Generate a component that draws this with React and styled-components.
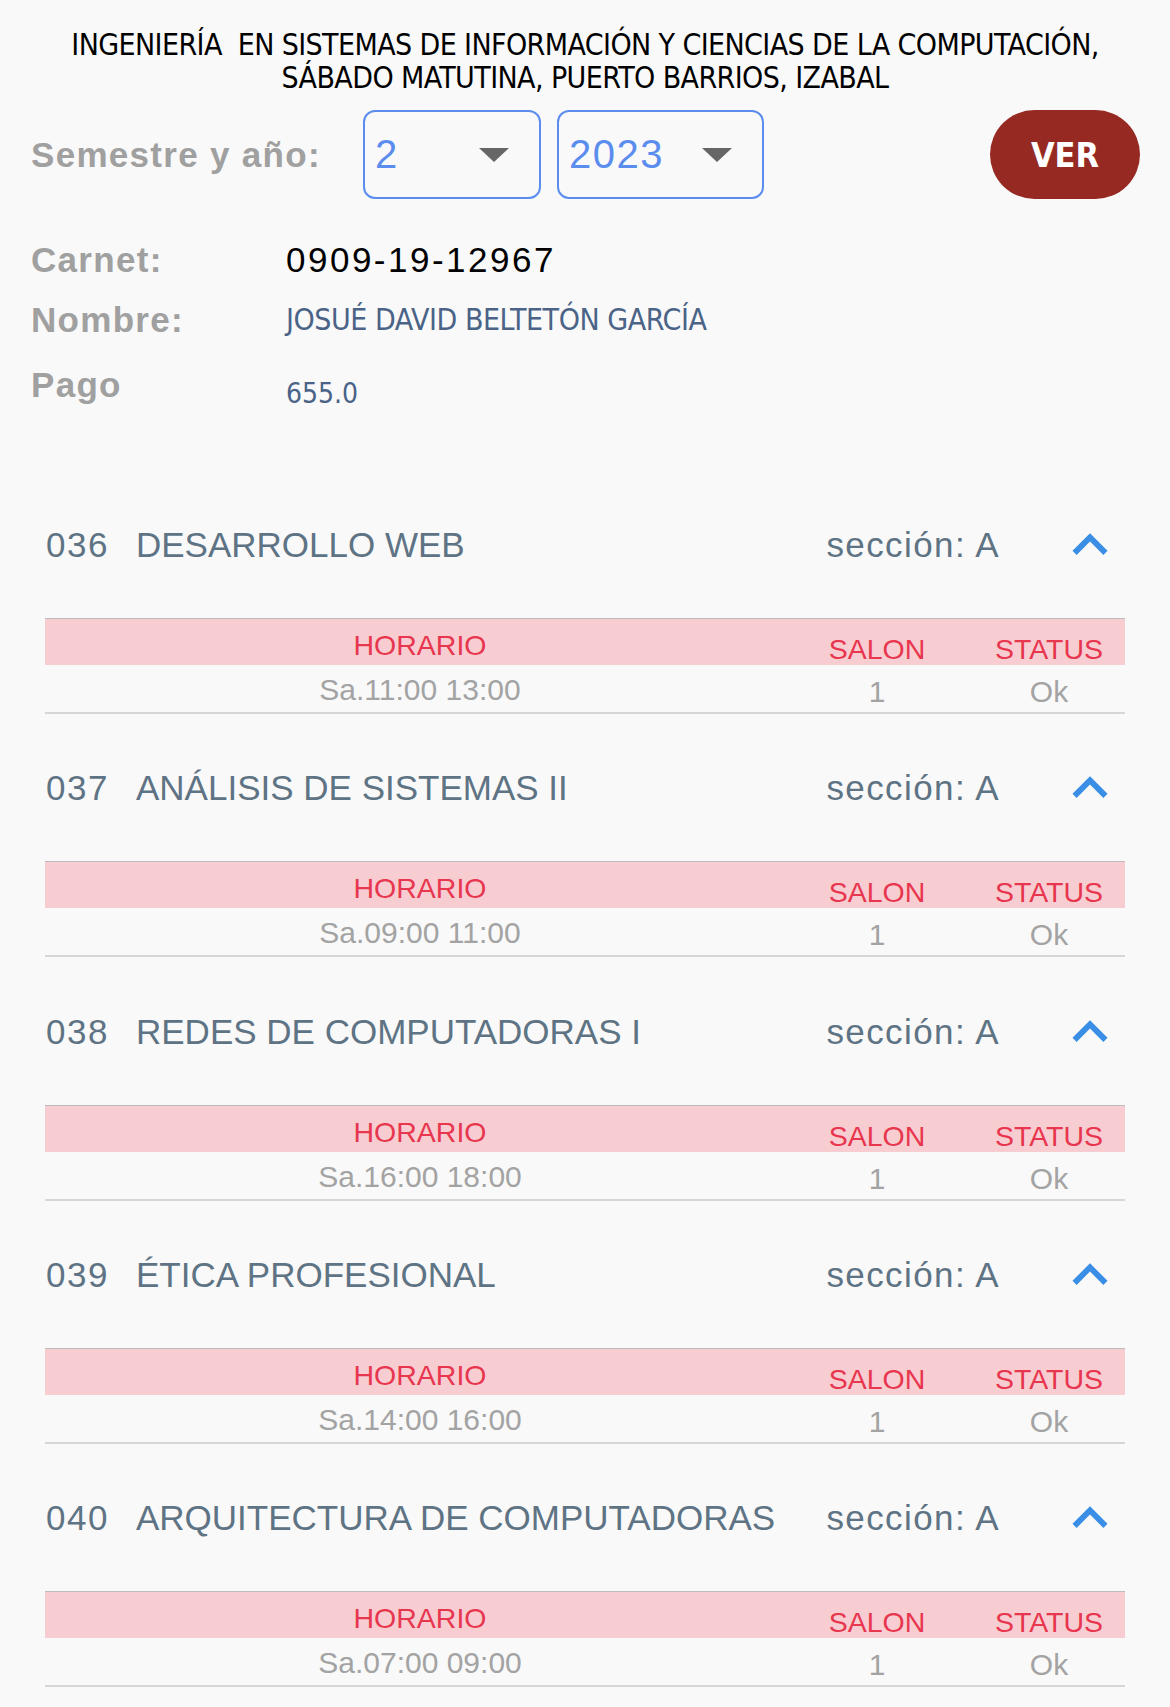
import React from "react"
import styled, { createGlobalStyle } from "styled-components"

const GlobalStyle = createGlobalStyle`
  body {
    margin: 0;
    background: #f9f9f9;
    font-family: "Liberation Sans", Arial, sans-serif;
  }
`

const Page = styled.div`
  width: 1170px;
  background: #f9f9f9;
`

const Title = styled.h1`
  margin: 0;
  padding-top: 28px;
  text-align: center;
  font-family: "DejaVu Sans Condensed", "DejaVu Sans", sans-serif;
  font-stretch: condensed;
  font-weight: normal;
  font-size: 30px;
  line-height: 33px;
  letter-spacing: -0.6px;
  color: #000;
`

const FilterRow = styled.div`
  display: flex;
  align-items: center;
  height: 89px;
  margin-top: 16px;
  padding: 0 30px 0 31px;
`

const Label = styled.span`
  font-weight: bold;
  font-size: 35px;
  letter-spacing: 1.3px;
  color: #a0a0a0;
`

const Select = styled.div`
  box-sizing: border-box;
  display: flex;
  align-items: center;
  justify-content: space-between;
  width: ${p => p.$width}px;
  height: 89px;
  margin-left: ${p => p.$gap}px;
  padding: 0 30px 0 10px;
  border: 2px solid #5b8def;
  border-radius: 12px;
  font-family: "Liberation Sans", Arial, sans-serif;
  font-size: 40px;
  letter-spacing: 1.5px;
  color: #5b8def;
`

const Caret = styled.span`
  width: 0;
  height: 0;
  border-left: 15px solid transparent;
  border-right: 15px solid transparent;
  border-top: 14px solid #666;
`

const Button = styled.button`
  width: 150px;
  height: 89px;
  margin-left: auto;
  border: none;
  border-radius: 45px;
  background: #962a23;
  color: #fff;
  font-family: "DejaVu Sans Condensed", "DejaVu Sans", sans-serif;
  font-stretch: condensed;
  font-weight: bold;
  font-size: 34px;
`

const Info = styled.div`
  margin-top: 30.5px;
  padding-left: 31px;
`

const InfoRow = styled.div`
  display: grid;
  grid-template-columns: 255px 1fr;
  align-items: ${p => (p.$top ? "start" : "center")};
  height: 60px;
`

const Value = styled.span`
  font-size: 35px;
  letter-spacing: 2.5px;
  color: #000;
`

const NameValue = styled.span`
  font-family: "DejaVu Sans Condensed", "DejaVu Sans", sans-serif;
  font-stretch: condensed;
  font-size: ${p => p.$size}px;
  letter-spacing: ${p => p.$spacing || 0}px;
  color: #4a6387;
  padding-top: ${p => p.$shift || 0}px;
`

const TopLabel = styled(Label)`
  padding-top: ${p => p.$shift || 0}px;
`

const CourseList = styled.div`
  margin-top: 100.5px;
`

const Section = styled.section`
  padding: 0 45px 39.3px;
`

const CourseHead = styled.div`
  display: flex;
  align-items: center;
  height: 70px;
  font-size: 35px;
  color: #5e7384;
`

const Code = styled.span`
  width: 90px;
  padding-left: 1px;
  letter-spacing: 1.5px;
`

const CourseName = styled.span`
  flex: 1;
`

const Seccion = styled.span`
  margin-right: 55px;
  letter-spacing: 1.4px;
`

const Toggle = styled.span`
  display: flex;
  justify-content: center;
  width: 70px;
  color: #3a8ee6;
`

const Table = styled.div`
  margin-top: 38px;
  border-top: 1px solid #bcbcbc;
  border-bottom: 2px solid #d6d6d6;
`

const Row = styled.div`
  display: grid;
  grid-template-columns: 750px 164px 166px;
  height: ${p => p.$height}px;
  background: ${p => p.$head ? "#f7cdd2" : "transparent"};
`

const Cell = styled.div`
  text-align: center;
  font-size: ${p => p.$head ? 28.5 : 30}px;
  line-height: ${p => p.$height}px;
  padding-top: ${p => p.$shift}px;
  padding-left: ${p => p.$indent || 0}px;
  color: ${p => p.$head ? "#e8364f" : "#a3a3a3"};
`

const Chevron = () => (
  <svg width="76" height="76" viewBox="0 0 24 24" fill="currentColor">
    <path d="M12 8l-6 6 1.41 1.41L12 10.83l4.59 4.58L18 14z" />
  </svg>
)

const courses = [
  { code: "036", name: "DESARROLLO WEB", time: "Sa.11:00 13:00" },
  { code: "037", name: "ANÁLISIS DE SISTEMAS II", time: "Sa.09:00 11:00" },
  { code: "038", name: "REDES DE COMPUTADORAS I", time: "Sa.16:00 18:00" },
  { code: "039", name: "ÉTICA PROFESIONAL", time: "Sa.14:00 16:00" },
  { code: "040", name: "ARQUITECTURA DE COMPUTADORAS", time: "Sa.07:00 09:00" },
]

const Course = ({ course }) => (
  <Section>
    <CourseHead>
      <Code>{course.code}</Code>
      <CourseName>{course.name}</CourseName>
      <Seccion>sección: A</Seccion>
      <Toggle><Chevron /></Toggle>
    </CourseHead>
    <Table>
      <Row $head $height={46}>
        <Cell $head $height={46} $shift={3}>HORARIO</Cell>
        <Cell $head $height={46} $shift={7}>SALON</Cell>
        <Cell $head $height={46} $shift={7} $indent={14}>STATUS</Cell>
      </Row>
      <Row $height={47}>
        <Cell $height={45} $shift={2}>{course.time}</Cell>
        <Cell $height={41} $shift={6}>1</Cell>
        <Cell $height={41} $shift={6} $indent={14}>Ok</Cell>
      </Row>
    </Table>
  </Section>
)

const App = () => (
  <Page>
    <GlobalStyle />
    <Title>
      INGENIERÍA&nbsp; EN SISTEMAS DE INFORMACIÓN Y CIENCIAS DE LA COMPUTACIÓN,
      <br />
      SÁBADO MATUTINA, PUERTO BARRIOS, IZABAL
    </Title>
    <FilterRow>
      <Label>Semestre y año:</Label>
      <Select $width={178} $gap={42}>2<Caret /></Select>
      <Select $width={207} $gap={16}>2023<Caret /></Select>
      <Button>VER</Button>
    </FilterRow>
    <Info>
      <InfoRow>
        <Label>Carnet:</Label>
        <Value>0909-19-12967</Value>
      </InfoRow>
      <InfoRow>
        <Label>Nombre:</Label>
        <NameValue $size={30} $spacing={-0.45}>JOSUÉ DAVID BELTETÓN GARCÍA</NameValue>
      </InfoRow>
      <InfoRow $top>
        <TopLabel $shift={15}>Pago</TopLabel>
        <NameValue $size={28} $shift={27}>655.0</NameValue>
      </InfoRow>
    </Info>
    <CourseList>
      {courses.map(c => <Course key={c.code} course={c} />)}
    </CourseList>
  </Page>
)

export default App
